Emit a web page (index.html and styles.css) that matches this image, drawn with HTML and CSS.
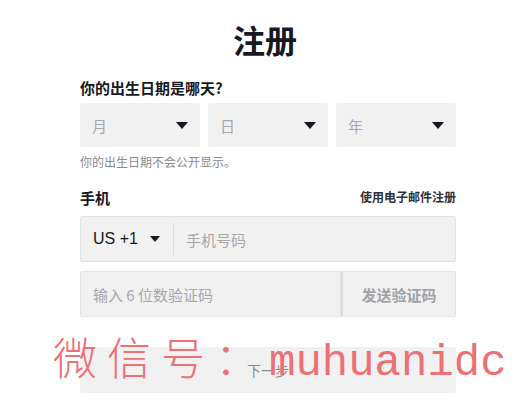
FILE: index.html
```html
<!DOCTYPE html>
<html lang="zh-CN">
<head>
    <meta charset="UTF-8">
    <title>注册</title>
    <link rel="stylesheet" href="styles.css">
</head>
<body>
    <div class="container">
        <h1 class="title">注册</h1>

        <div class="label">你的出生日期是哪天?</div>
        <div class="birth">
            <div class="select">月<span class="caret"></span></div>
            <div class="select">日<span class="caret"></span></div>
            <div class="select">年<span class="caret"></span></div>
        </div>
        <div class="hint">你的出生日期不会公开显示。</div>

        <div class="row-head">
            <div class="label">手机</div>
            <div class="link">使用电子邮件注册</div>
        </div>
        <div class="phone">
            <div class="code">US +1<span class="caret small"></span></div>
            <div class="divider"></div>
            <div class="placeholder">手机号码</div>
        </div>

        <div class="verify">
            <div class="verify-input">输入 6 位数验证码</div>
            <div class="send">发送验证码</div>
        </div>

        <div class="next">下一步</div>
    </div>

    <div class="watermark"><span class="wm-cn">微信号：</span><span class="wm-en">muhuanidc</span></div>
</body>
</html>
```

FILE: styles.css
```css
body{
    margin: 0;
    background: #fff;
    font-family: "Noto Sans CJK SC", "Liberation Sans", sans-serif;
    color: #161823;
}
.container{
    width: 376px;
    margin-left: 80px;
    position: relative;
}
.title{
    margin: 0;
    padding-top: 16px;
    height: 46px;
    font-size: 32px;
    line-height: 46px;
    text-align: center;
    font-weight: 700;
    margin-left: -6px;
}
.label{
    font-size: 15px;
    font-weight: 700;
    line-height: 22px;
}
.container > .label{
    margin-top: 15px;
}
.birth{
    display: flex;
    gap: 8px;
    margin-top: 4px;
}
.select{
    flex: 1;
    height: 44px;
    background: #f1f1f2;
    border-radius: 3px;
    display: flex;
    align-items: center;
    justify-content: space-between;
    padding: 0 12px 0 12px;
    font-size: 15px;
    color: #a7a7ab;
}
.caret{
    width: 0;
    height: 0;
    border-left: 6px solid transparent;
    border-right: 6px solid transparent;
    border-top: 7px solid #161823;
}
.caret.small{
    border-left-width: 5px;
    border-right-width: 5px;
    border-top-width: 6px;
    margin-left: 12px;
}
.hint{
    font-size: 12px;
    color: #8a8b91;
    margin-top: 6px;
    line-height: 18px;
}
.row-head{
    display: flex;
    justify-content: space-between;
    align-items: center;
    margin-top: 16px;
}
.link{
    font-size: 12px;
    font-weight: 700;
    color: #2f3035;
    margin-top: -4px;
}
.phone{
    margin-top: 7px;
    height: 44px;
    border: 1px solid #e3e3e4;
    background: #f1f1f2;
    border-radius: 2px;
    display: flex;
    align-items: center;
    padding-left: 12px;
}
.code{
    font-family: "Liberation Sans", sans-serif;
    font-size: 16px;
    display: flex;
    align-items: center;
}
.divider{
    width: 1px;
    height: 32px;
    background: #dedee0;
    margin-left: 13px;
}
.placeholder{
    margin-left: 12px;
    font-size: 15px;
    color: #a7a7ab;
}
.verify{
    display: flex;
    margin-top: 9px;
    height: 46px;
}
.verify-input{
    width: 247px;
    border: 1px solid #e3e3e4;
    background: #f1f1f2;
    border-radius: 2px 0 0 2px;
    display: flex;
    align-items: center;
    padding-left: 12px;
    font-size: 15px;
    color: #a7a7ab;
}
.send{
    flex: 1;
    border: 1px solid #e3e3e4;
    border-left: 2px solid #dcdcde;
    background: #f1f1f2;
    border-radius: 0 2px 2px 0;
    display: flex;
    align-items: center;
    justify-content: center;
    font-size: 15px;
    font-weight: 700;
    color: #a2a2a6;
}
.next{
    margin-top: 30px;
    height: 46px;
    background: #f1f1f2;
    border-radius: 3px;
    display: flex;
    align-items: center;
    justify-content: center;
    font-size: 14px;
    color: #8a8b91;
    margin-left: 0;
}
.watermark{
    position: absolute;
    left: 53px;
    top: 326px;
    color: #ec7074;
    white-space: nowrap;
    line-height: 60px;
}
.wm-cn{
    font-family: "Noto Sans CJK SC", sans-serif;
    font-weight: 300;
    font-size: 44px;
    letter-spacing: 10px;
}
.wm-en{
    font-family: "Liberation Mono", monospace;
    font-size: 44px;
}
```
